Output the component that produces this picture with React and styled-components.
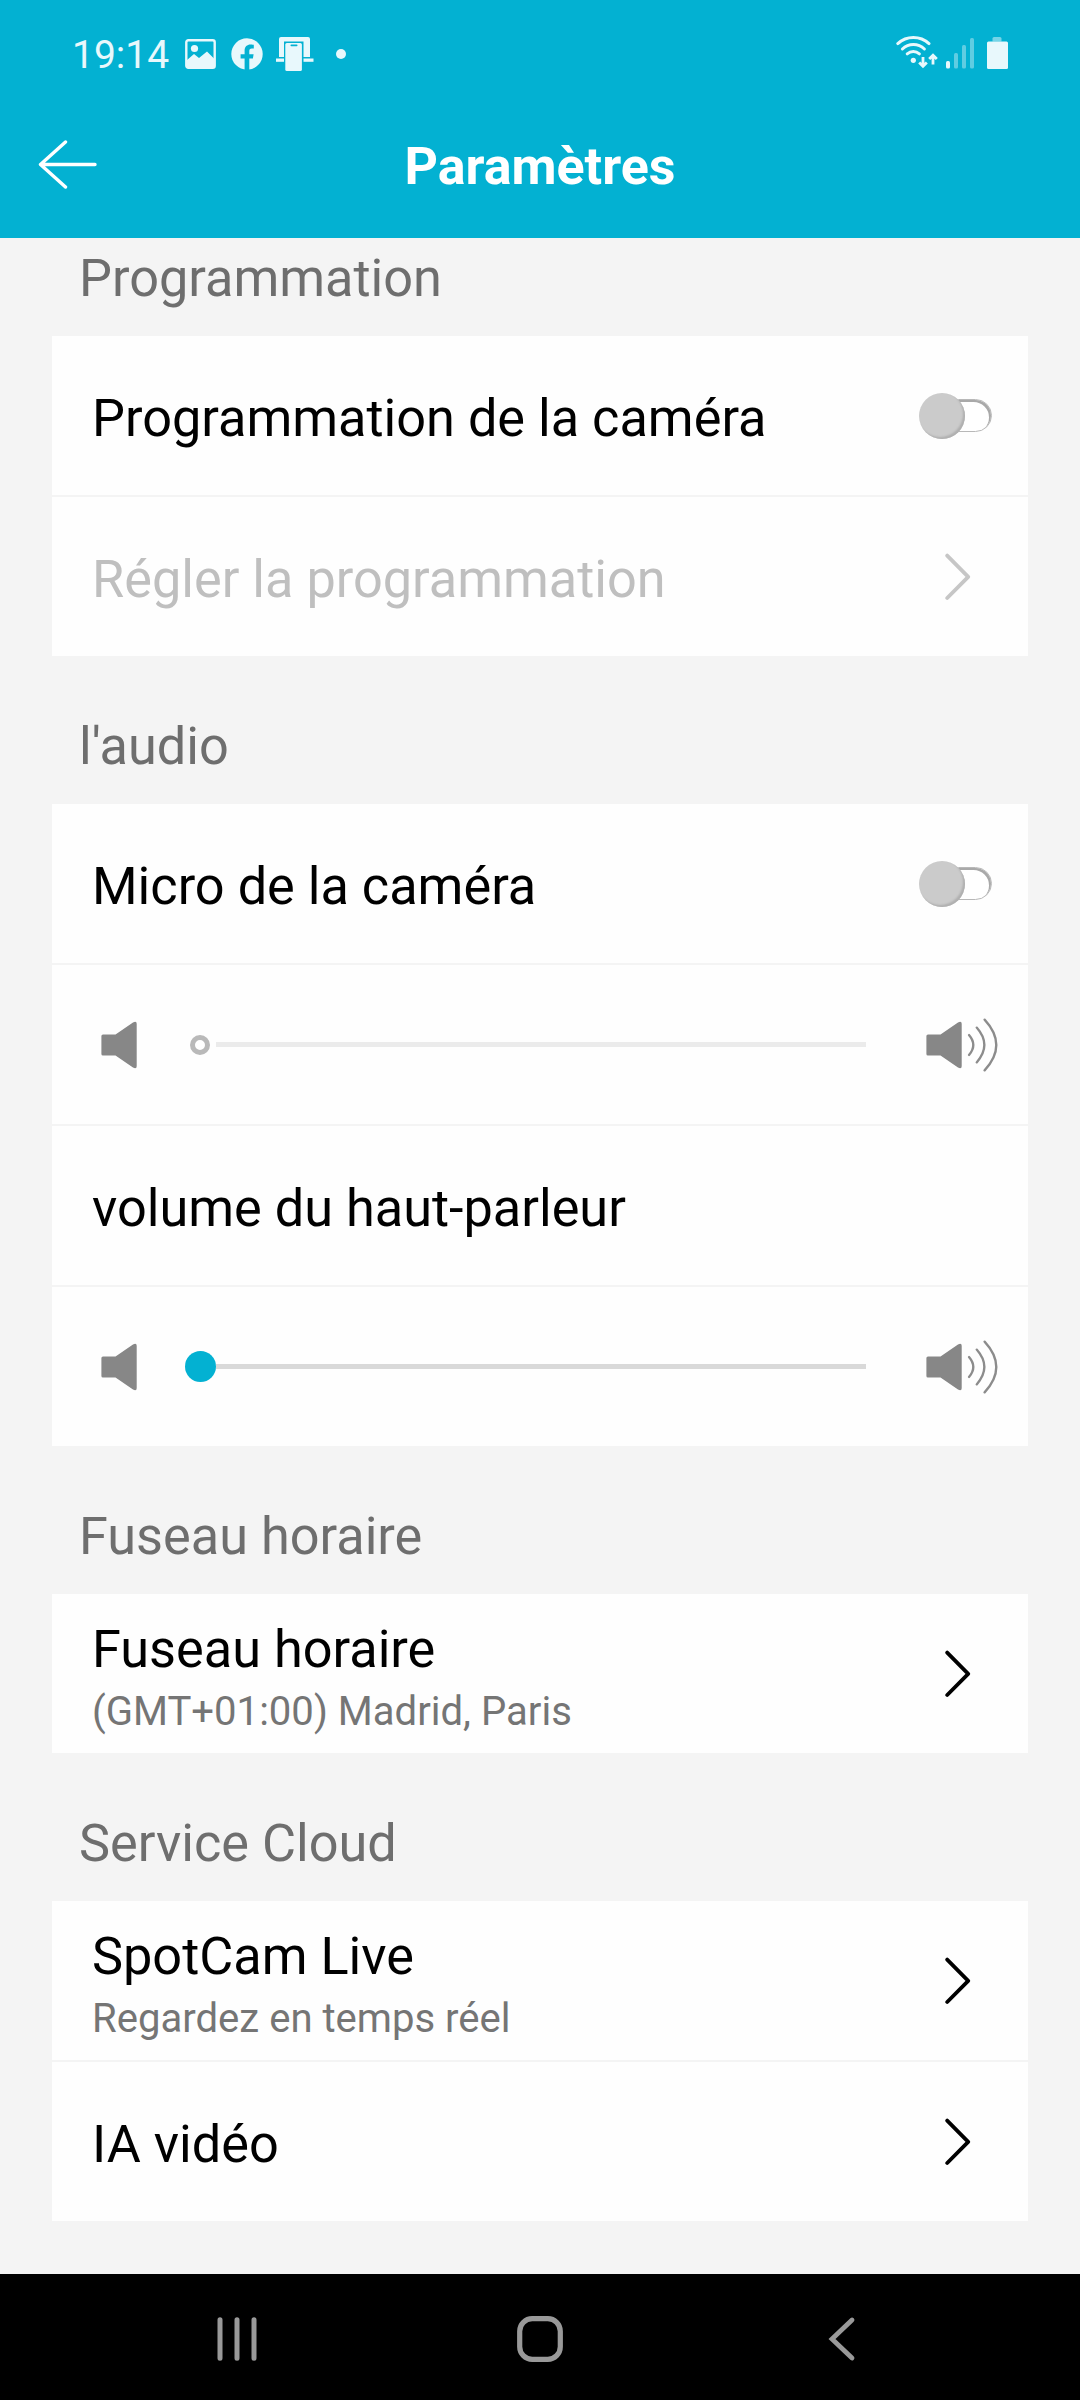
import React from 'react'
import styled, { createGlobalStyle } from 'styled-components'

const sections = [
  {
    title: 'Programmation',
    rows: [
      { type: 'switch', label: 'Programmation de la caméra' },
      { type: 'link', label: 'Régler la programmation', disabled: true },
    ],
  },
  {
    title: "l'audio",
    rows: [
      { type: 'switch', label: 'Micro de la caméra' },
      { type: 'slider', disabled: true },
      { type: 'text', label: 'volume du haut-parleur' },
      { type: 'slider' },
    ],
  },
  {
    title: 'Fuseau horaire',
    rows: [
      { type: 'link', label: 'Fuseau horaire', detail: '(GMT+01:00) Madrid, Paris' },
    ],
  },
  {
    title: 'Service Cloud',
    rows: [
      { type: 'link', label: 'SpotCam Live', detail: 'Regardez en temps réel' },
      { type: 'link', label: 'IA vidéo' },
    ],
  },
]

function StatusBar() {
  return (
    <Status>
      <Notifications>
        <Time>19:14</Time>
        <svg width="31" height="30" viewBox="0 0 31 30">
          <rect x="1.3" y="1.3" width="28.4" height="27.4" rx="2" fill="none" stroke="#e8f8fc" strokeWidth="2.4" />
          <circle cx="9.5" cy="9.5" r="3.6" fill="#e8f8fc" />
          <path d="M2 21 L9 15 L14 19 L22 12.5 L29.5 20 V28.5 H2 Z" fill="#e8f8fc" />
        </svg>
        <svg width="32" height="32" viewBox="0 0 32 32">
          <circle cx="16" cy="16" r="15.7" fill="#e8f8fc" />
          <path d="M13.6 32 V20.6 H9.6 V16.2 H13.6 V12.6 C13.6 8.6 16 6.4 19.6 6.4 C21.2 6.4 22.8 6.7 22.8 6.7 V10.5 H20.8 C18.8 10.5 18.3 11.7 18.3 13 V16.2 H22.6 L21.9 20.6 H18.3 V32 Z" fill="#03b1d2" />
        </svg>
        <svg width="38" height="35" viewBox="0 0 38 35">
          <path d="M3 2 Q3 0 5 0 H32 Q34 0 34 2 V20 H27.5 V4.5 H8 V20 H3 Z" fill="#e8f8fc" />
          <rect x="0" y="21.5" width="8" height="3.3" fill="#e8f8fc" />
          <rect x="27.5" y="21.5" width="10" height="3.3" fill="#e8f8fc" />
          <rect x="9.3" y="6" width="16.6" height="28" rx="1.5" fill="#e8f8fc" />
          <rect x="14.5" y="7.6" width="7" height="1.6" rx="0.8" fill="#03b1d2" />
        </svg>
        <Dot />
      </Notifications>
      <Indicators>
        <svg width="36" height="34" viewBox="0 0 36 34" fill="none" stroke="#e8f8fc" strokeWidth="3" strokeLinecap="round">
          <path d="M1.8 8.6 A23 23 0 0 1 33 8.6" />
          <path d="M6.4 14 A16 16 0 0 1 28.4 14" />
          <path d="M11.2 18.8 A9.6 9.6 0 0 1 23.4 18.8" />
          <circle cx="17.3" cy="25.3" r="2.6" fill="#e8f8fc" stroke="none" />
        </svg>
        <DataArrows width="20" height="18" viewBox="0 0 20 18" fill="none" stroke="#e8f8fc" strokeWidth="2.8">
          <path d="M5 6 V14.5 M1.2 11.4 L5 15.2 L8.8 11.4" />
          <path d="M15 13.5 V5 M11.2 8 L15 4.2 L18.8 8" />
        </DataArrows>
        <svg width="28" height="32" viewBox="0 0 28 32" fill="#e8f8fc">
          <rect x="0" y="24" width="4" height="7.5" rx="1.5" />
          <g opacity="0.4">
            <rect x="8" y="16" width="4" height="15.5" rx="1.5" />
            <rect x="16" y="8" width="4" height="23.5" rx="1.5" />
            <rect x="24" y="1" width="4" height="30.5" rx="1.5" />
          </g>
        </svg>
        <Battery width="21" height="32" viewBox="0 0 21 32" fill="#e8f8fc">
          <path d="M5.5 4.5 V1.5 Q5.5 0 7 0 H13 Q14.5 0 14.5 1.5 V4.5 Z" opacity="0.5" />
          <rect x="0" y="4.5" width="21" height="27.5" rx="1.5" />
        </Battery>
      </Indicators>
    </Status>
  )
}

function Chevron({ disabled }) {
  return (
    <svg width="28" height="48" viewBox="0 0 28 48" fill="none" stroke={disabled ? '#c6c6c6' : '#000'} strokeWidth="3.8" strokeLinecap="round" strokeLinejoin="round">
      <path d="M3.2 2.6 L24.2 23.8 L3.2 45" />
    </svg>
  )
}

// waves are only drawn for the loud end of the slider
function Speaker({ loud }) {
  return (
    <svg width={loud ? 72 : 36} height="56" viewBox={loud ? '0 0 72 56' : '0 0 36 56'} fill="#878787">
      <path d="M2 17.5 H14.5 L32 5.4 Q35.7 3.5 35.7 6.8 V49.2 Q35.7 52.5 32 50.6 L14.5 38.5 H2 Q0.4 38.5 0.4 37 V19 Q0.4 17.5 2 17.5 Z" />
      {loud && (
        <g fill="none" stroke="#8c8c8c" strokeWidth="2.3" strokeLinecap="round">
          <path d="M43 18 Q51.6 28 43 38" />
          <path d="M50.7 10.6 Q66 28 50.7 45.4" />
          <path d="M58.6 2.6 Q82 28 58.6 53.4" />
        </g>
      )}
    </svg>
  )
}

function Row({ row }) {
  if (row.type === 'slider') {
    return (
      <SliderRow>
        <Speaker />
        <Slider>
          <Thumb disabled={row.disabled} />
          <Track disabled={row.disabled} />
        </Slider>
        <Speaker loud />
      </SliderRow>
    )
  }
  return (
    <RowView $inset={row.type === 'switch' ? 36 : 56}>
      <Labels $double={!!row.detail}>
        <Label $disabled={row.disabled}>{row.label}</Label>
        {row.detail && <Detail>{row.detail}</Detail>}
      </Labels>
      {row.type === 'switch' && (
        <Switch>
          <Knob />
          <Rail />
        </Switch>
      )}
      {row.type === 'link' && <Chevron disabled={row.disabled} />}
    </RowView>
  )
}

function App() {
  return (
    <Screen>
      <GlobalStyle />
      <Header>
        <StatusBar />
        <TitleBar>
          <svg width="60" height="50" viewBox="0 0 60 50" fill="none" stroke="#fff" strokeWidth="3.4" strokeLinecap="round" strokeLinejoin="round">
            <path d="M27.5 2 L2.5 24.5 L27.5 47 M2.5 24.5 H57" />
          </svg>
          <Title>Paramètres</Title>
        </TitleBar>
      </Header>

      <Content>
        <Scrolled>
          {sections.map((section) => (
            <section key={section.title}>
              <SectionTitle>{section.title}</SectionTitle>
              <Card>
                {section.rows.map((row, i) => <Row key={i} row={row} />)}
              </Card>
            </section>
          ))}
        </Scrolled>
      </Content>

      <NavBar>
        <svg width="40" height="46" viewBox="0 0 40 46" stroke="#999" strokeWidth="5" strokeLinecap="round">
          <path d="M3 3.8 V42.2 M20 3.8 V42.2 M37 3.8 V42.2" />
        </svg>
        <svg width="46" height="46" viewBox="0 0 46 46" fill="none" stroke="#999" strokeWidth="5.2">
          <rect x="2.7" y="2.7" width="40.6" height="40.6" rx="12.5" />
        </svg>
        <svg width="40" height="46" viewBox="0 0 40 46" fill="none" stroke="#999" strokeWidth="4.8" strokeLinecap="round">
          <path d="M30 4 L10 23 L30 42" />
        </svg>
      </NavBar>
    </Screen>
  )
}

const GlobalStyle = createGlobalStyle`
  * {
    box-sizing: border-box;
  }
  body {
    margin: 0;
    font-family: Roboto, sans-serif;
  }
  svg {
    display: block;
    flex-shrink: 0;
  }
`

const Screen = styled.div`
  display: flex;
  flex-direction: column;
  width: 1080px;
  height: 2400px;
  overflow: hidden;
  background-color: #f4f4f4;
`

const Header = styled.header`
  height: 238px;
  background-color: #03b1d2;
  color: #fff;
`

const Status = styled.div`
  display: flex;
  justify-content: space-between;
  height: 92px;
  padding: 15px 72px 0 72px;
`

const Notifications = styled.div`
  display: flex;
  align-items: center;
  height: 78px;

  svg + svg {
    margin-left: 15px;
  }
  svg:last-of-type {
    margin-left: 13px;
  }
`

const Time = styled.span`
  width: 113px;
  padding-top: 1px;
  font-size: 39px;
  color: #e8f8fc;
`

const Dot = styled.span`
  width: 10px;
  height: 10px;
  margin-left: 22px;
  border-radius: 50%;
  background-color: #e8f8fc;
`

const Indicators = styled.div`
  display: flex;
  align-items: flex-end;
  height: 54px;
`

// sits over the lower right corner of the wifi arcs
const DataArrows = styled.svg`
  margin-left: -14px;
  margin-right: 8px;
`

const Battery = styled.svg`
  margin-left: 13px;
`

const TitleBar = styled.div`
  display: grid;
  grid-template-columns: 60px 1fr 60px;
  align-items: center;
  height: 145px;
  padding: 0 38px;
`

const Title = styled.h1`
  margin: 0;
  padding-top: 4px;
  font-size: 52px;
  font-weight: bold;
  line-height: 60px;
  text-align: center;
`

const Content = styled.main`
  flex: 1;
  overflow: hidden;
`

const Scrolled = styled.div`
  margin-top: -50px;
  padding: 0 52px;
`

const SectionTitle = styled.h2`
  display: flex;
  align-items: flex-end;
  height: 148px;
  margin: 0;
  padding: 0 0 27px 27px;
  font-size: 52.25px;
  font-weight: normal;
  line-height: 60px;
  color: #6e6e6e;
`

const Card = styled.div`
  display: flex;
  flex-direction: column;
  gap: 2px;
`

const RowView = styled.div`
  display: flex;
  align-items: center;
  justify-content: space-between;
  height: 159px;
  padding: 0 ${({ $inset }) => $inset}px 0 40px;
  background-color: #fefefe;
`

const Labels = styled.div`
  display: flex;
  flex-direction: column;
  padding-top: ${({ $double }) => ($double ? 12 : 6)}px;
`

const Label = styled.span`
  font-size: 52.25px;
  line-height: 60px;
  color: ${({ $disabled }) => ($disabled ? '#bfbfbf' : '#000')};
`

const Detail = styled.span`
  margin-top: 5px;
  font-size: 40.1px;
  line-height: 54px;
  color: #757575;
`

const Switch = styled.div`
  display: flex;
  align-items: center;
`

const Knob = styled.div`
  z-index: 1;
  width: 46px;
  height: 46px;
  border-radius: 50%;
  background-color: #cbcbcb;
  box-shadow: inset -2px -2px 2px #b0b0b0;
`

const Rail = styled.div`
  width: 50px;
  height: 33px;
  margin-left: -23px;
  border-radius: 17px;
  border: 1px solid #b8b8b8;
  background-color: #fff;
  box-shadow: inset -2px 2px 0 #a9a9a9;
`

const SliderRow = styled(RowView)`
  padding: 0 30px 0 49px;
`

const Slider = styled.div`
  display: flex;
  align-items: center;
  width: 681px;
  margin-right: 13px;
`

const Thumb = styled.div`
  width: ${({ disabled }) => (disabled ? 20 : 31)}px;
  height: ${({ disabled }) => (disabled ? 20 : 31)}px;
  margin: ${({ disabled }) => (disabled ? '0 6px 0 5px' : 0)};
  border-radius: 50%;
  border: ${({ disabled }) => (disabled ? '5px solid #b9b9b9' : 'none')};
  background-color: ${({ disabled }) => (disabled ? '#fff' : '#03b1d2')};
`

const Track = styled.div`
  flex: 1;
  height: 5px;
  background-color: ${({ disabled }) => (disabled ? '#ebebeb' : '#d9d9d9')};
`

const NavBar = styled.nav`
  display: flex;
  align-items: center;
  justify-content: space-between;
  height: 126px;
  padding: 3px 218px 0 217px;
  background-color: #000;
`

export default App
